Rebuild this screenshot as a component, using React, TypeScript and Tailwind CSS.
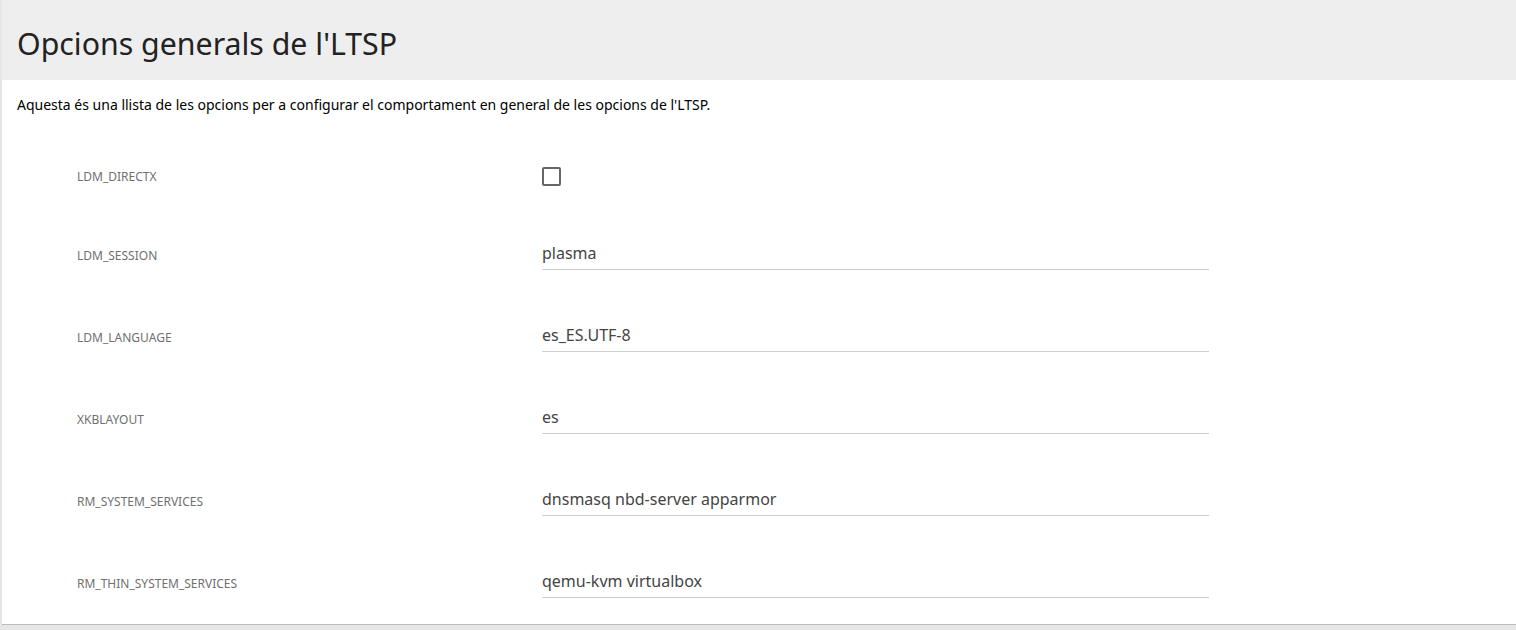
import { useState } from 'react';

const fields = [
  { name: 'LDM_SESSION', value: 'plasma' },
  { name: 'LDM_LANGUAGE', value: 'es_ES.UTF-8' },
  { name: 'XKBLAYOUT', value: 'es' },
  { name: 'RM_SYSTEM_SERVICES', value: 'dnsmasq nbd-server apparmor' },
  { name: 'RM_THIN_SYSTEM_SERVICES', value: 'qemu-kvm virtualbox' },
];

export default function App() {
  const [directx, setDirectx] = useState(false);

  return (
    <div className="h-[630px] overflow-hidden bg-[#e6e6e6] pl-[2px] font-['Noto_Sans',sans-serif]">
      <div className="h-[625px] border-b border-[#bdbdbd] bg-white">
        <header className="flex h-[80px] items-center bg-[#eeeeee] pl-[15px]">
          <h1 className="mt-[9px] text-[30.3px] leading-none text-[#222222]">Opcions generals de l'LTSP</h1>
        </header>

        <p className="pl-[15px] pt-[15px] text-[14px] leading-[20px] text-black">
          Aquesta és una llista de les opcions per a configurar el comportament en general de les opcions de l'LTSP.
        </p>

        <div className="mt-[24px]">
          <div className="flex h-[73px] items-center">
            <span className="mt-[2px] w-[540px] pl-[75px] text-[12px] text-[#707070]">LDM_DIRECTX</span>
            <button
              onClick={() => setDirectx(!directx)}
              className="mt-[2px] h-[19px] w-[19px] rounded-[2px] border-2 border-[#666666] bg-white"
            />
          </div>

          {fields.map((f) => (
            <div key={f.name} className="flex h-[82px] items-center">
              <span className="mt-[6px] w-[540px] pl-[75px] text-[12px] text-[#707070]">{f.name}</span>
              <input
                defaultValue={f.value}
                className="h-[34px] w-[667px] border-b border-[#cfcfcf] bg-transparent text-[16px] text-[#444444] outline-none"
              />
            </div>
          ))}
        </div>
      </div>
    </div>
  );
}
